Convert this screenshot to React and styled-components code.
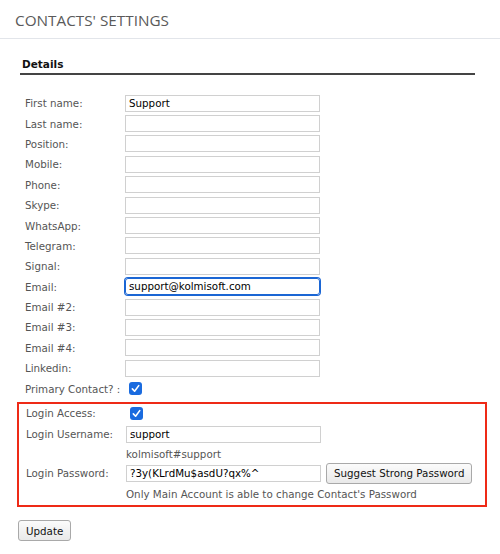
import React from 'react';
import styled, { createGlobalStyle } from 'styled-components';

const GlobalStyle = createGlobalStyle`
  body {
    margin: 0;
    background: #fff;
    font-family: "DejaVu Sans", Verdana, sans-serif;
  }
`;

const Page = styled.div`
  width: 500px;
  height: 554px;
  overflow: hidden;
`;

const Header = styled.div`
  height: 39px;
  box-sizing: border-box;
  padding: 10px 15px 0 15px;
  border-bottom: 1px solid #e2e5ea;
  font-family: "Open Sans", sans-serif;
  font-size: 15.3px;
  color: #5a5a5a;
`;

const Content = styled.div`
  padding: 19px 13px 0 18px;
`;

const Section = styled.div`
  margin: 0 12px 0 2px;
  padding: 0 0 3px 2px;
  border-bottom: 2px solid #444;
  font-size: 10.5px;
  font-weight: bold;
  color: #111;
`;

const Form = styled.div`
  margin-top: 18px;
`;

const Row = styled.div`
  display: flex;
  align-items: center;
  height: ${p => p.h || 20.4}px;
  padding-left: 7px;
`;

const Label = styled.div`
  width: 100px;
  flex-shrink: 0;
  font-size: 10.3px;
  color: #555;
`;

const Input = styled.div`
  width: 195px;
  height: 17px;
  box-sizing: border-box;
  border: 1px solid ${p => (p.focused ? '#1b66d4' : '#d0d0d0')};
  box-shadow: ${p => (p.focused ? '0 0 0 1px #1b66d4' : 'none')};
  border-radius: ${p => (p.focused ? '3px' : '0')};
  padding: 0 3px;
  font-size: 10.3px;
  line-height: 15px;
  color: #000;
  white-space: nowrap;
  overflow: hidden;
`;

const Check = styled.span`
  display: inline-flex;
  align-items: center;
  justify-content: center;
  width: 13px;
  height: 13px;
  margin-left: 4px;
  border-radius: 3px;
  background: #1a6bdf;
`;

const LoginBox = styled.div`
  margin: 3px 0 0 -1px;
  border: 2px solid #ee2a17;
  padding: 0 0 2px 0;
`;

const Note = styled.div`
  font-size: 10.3px;
  color: #555;
`;

const Button = styled.button`
  font-family: "DejaVu Sans", Verdana, sans-serif;
  font-size: 10.3px;
  color: #111;
  background: linear-gradient(#fbfbfb, #e9e9e9);
  border: 1px solid #a9a9a9;
  border-radius: 3px;
  height: 21px;
  padding: 0 7px;
  white-space: nowrap;
  margin-left: ${p => (p.inline ? '5px' : '0')};
`;

const Footer = styled.div`
  margin-top: 13px;
`;

function Tick() {
  return (
    <Check>
      <svg width="9" height="9" viewBox="0 0 10 10">
        <path d="M1.5 5.4 L4 8 L8.6 1.8" fill="none" stroke="#fff" strokeWidth="1.8" strokeLinecap="round" strokeLinejoin="round" />
      </svg>
    </Check>
  );
}

const FIELDS = [
  ['First name:', 'Support'],
  ['Last name:', ''],
  ['Position:', ''],
  ['Mobile:', ''],
  ['Phone:', ''],
  ['Skype:', ''],
  ['WhatsApp:', ''],
  ['Telegram:', ''],
  ['Signal:', ''],
  ['Email:', 'support@kolmisoft.com', true],
  ['Email #2:', ''],
  ['Email #3:', ''],
  ['Email #4:', ''],
  ['Linkedin:', ''],
];

export default function App() {
  return (
    <Page>
      <GlobalStyle />
      <Header>CONTACTS' SETTINGS</Header>
      <Content>
        <Section>Details</Section>
        <Form>
          {FIELDS.map(([label, value, focused]) => (
            <Row key={label}>
              <Label>{label}</Label>
              <Input focused={focused}>{value}</Input>
            </Row>
          ))}
          <Row>
            <Label>Primary Contact? :</Label>
            <Tick />
          </Row>
          <LoginBox>
            <Row h={19}>
              <Label>Login Access:</Label>
              <Tick />
            </Row>
            <Row h={23}>
              <Label>Login Username:</Label>
              <Input>support</Input>
            </Row>
            <Row h={16}>
              <Label />
              <Note>kolmisoft#support</Note>
            </Row>
            <Row h={23}>
              <Label>Login Password:</Label>
              <Input>?3y(KLrdMu$asdU?qx%^</Input>
              <Button inline>Suggest Strong Password</Button>
            </Row>
            <Row h={18}>
              <Label />
              <Note>Only Main Account is able to change Contact's Password</Note>
            </Row>
          </LoginBox>
          <Footer>
            <Button>Update</Button>
          </Footer>
        </Form>
      </Content>
    </Page>
  );
}
